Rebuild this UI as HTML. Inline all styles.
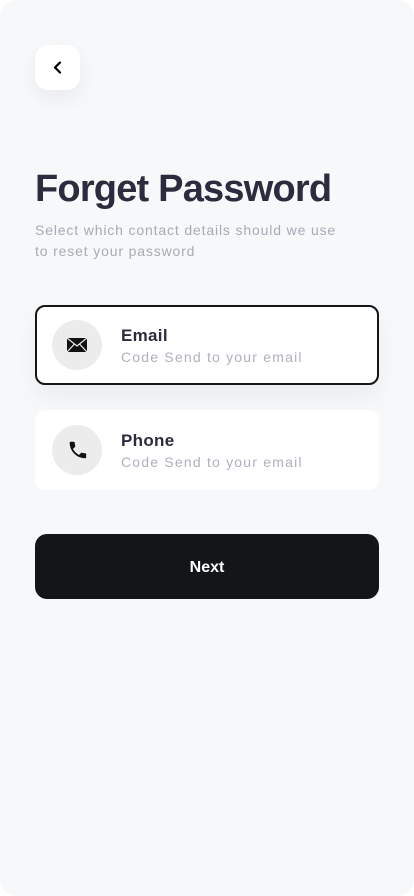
<!DOCTYPE html>
<html><head><style>
html,body{margin:0;padding:0;background:#fff}
body{width:414px;height:896px;overflow:hidden;font-family:"Liberation Sans",sans-serif}
.page{position:absolute;left:0;top:0;width:414px;height:896px;background:#f7f8fa;border-radius:16px}
.back{position:absolute;left:35px;top:45px;width:45px;height:45px;background:#fff;border-radius:13px;box-shadow:0 8px 20px rgba(0,0,0,0.06)}
.back svg{position:absolute;left:15px;top:15px}
h1{position:absolute;left:35px;top:168px;margin:0;font-size:38px;font-weight:bold;color:#2d2c3e;letter-spacing:-0.8px}
.sub{position:absolute;left:35px;top:220px;font-size:14px;line-height:21px;color:#a9a9b6;letter-spacing:0.85px}
.card{position:absolute;left:35px;width:344px;height:80px;background:#fff;border-radius:10px;box-sizing:border-box}
.card.sel{border:2px solid #141618;box-shadow:0 12px 24px rgba(0,0,0,0.05)}
.ic{position:absolute;left:17px;top:15px;width:50px;height:50px;border-radius:50%;background:#ececec}
.sel .ic{left:15px;top:13px}
.ic svg{position:absolute;left:14px;top:14px}
.t{position:absolute;left:86px;top:21px;font-size:17px;font-weight:bold;color:#2d2c3e;letter-spacing:0.3px}
.s{position:absolute;left:86px;top:44px;font-size:14px;color:#b0afbd;letter-spacing:1.2px}
.sel .t{left:84px;top:19px}.sel .s{left:84px;top:42px}
.btn{position:absolute;left:35px;top:534px;width:344px;height:65px;background:#131618;border-radius:12px;color:#fff;font-weight:bold;font-size:16px;text-align:center;line-height:67px}
</style></head><body><div class="page">
<div class="back"><svg width="15" height="15" viewBox="0 0 15 15"><path d="M10 2.5 L5 7.5 L10 12.5" stroke="#000" stroke-width="2.2" fill="none" stroke-linecap="round" stroke-linejoin="round"/></svg></div>
<h1>Forget Password</h1>
<div class="sub">Select which contact details should we use<br>to reset your password</div>
<div class="card sel" style="top:305px"><div class="ic"><svg width="22" height="22" viewBox="0 0 22 22"><rect x="1" y="4" width="20" height="14" fill="#111"/><path d="M1 4 L11 12 L21 4 M1 18 L8.5 10 M21 18 L13.5 10" stroke="#ececec" stroke-width="1.2" fill="none"/></svg></div><div class="t">Email</div><div class="s">Code Send to your email</div></div>
<div class="card" style="top:410px"><div class="ic"><svg width="22" height="22" viewBox="0 0 24 24"><path d="M6.6 10.8c1.4 2.8 3.8 5.1 6.6 6.6l2.2-2.2c.3-.3.7-.4 1-.2 1.1.4 2.3.6 3.6.6.6 0 1 .4 1 1V20c0 .6-.4 1-1 1C10.6 21 3 13.4 3 4c0-.6.4-1 1-1h3.5c.6 0 1 .4 1 1 0 1.3.2 2.5.6 3.6.1.3 0 .7-.2 1z" fill="#111" transform="translate(1,0)"/></svg></div><div class="t">Phone</div><div class="s">Code Send to your email</div></div>
<div class="btn">Next</div>
</div></body></html>
